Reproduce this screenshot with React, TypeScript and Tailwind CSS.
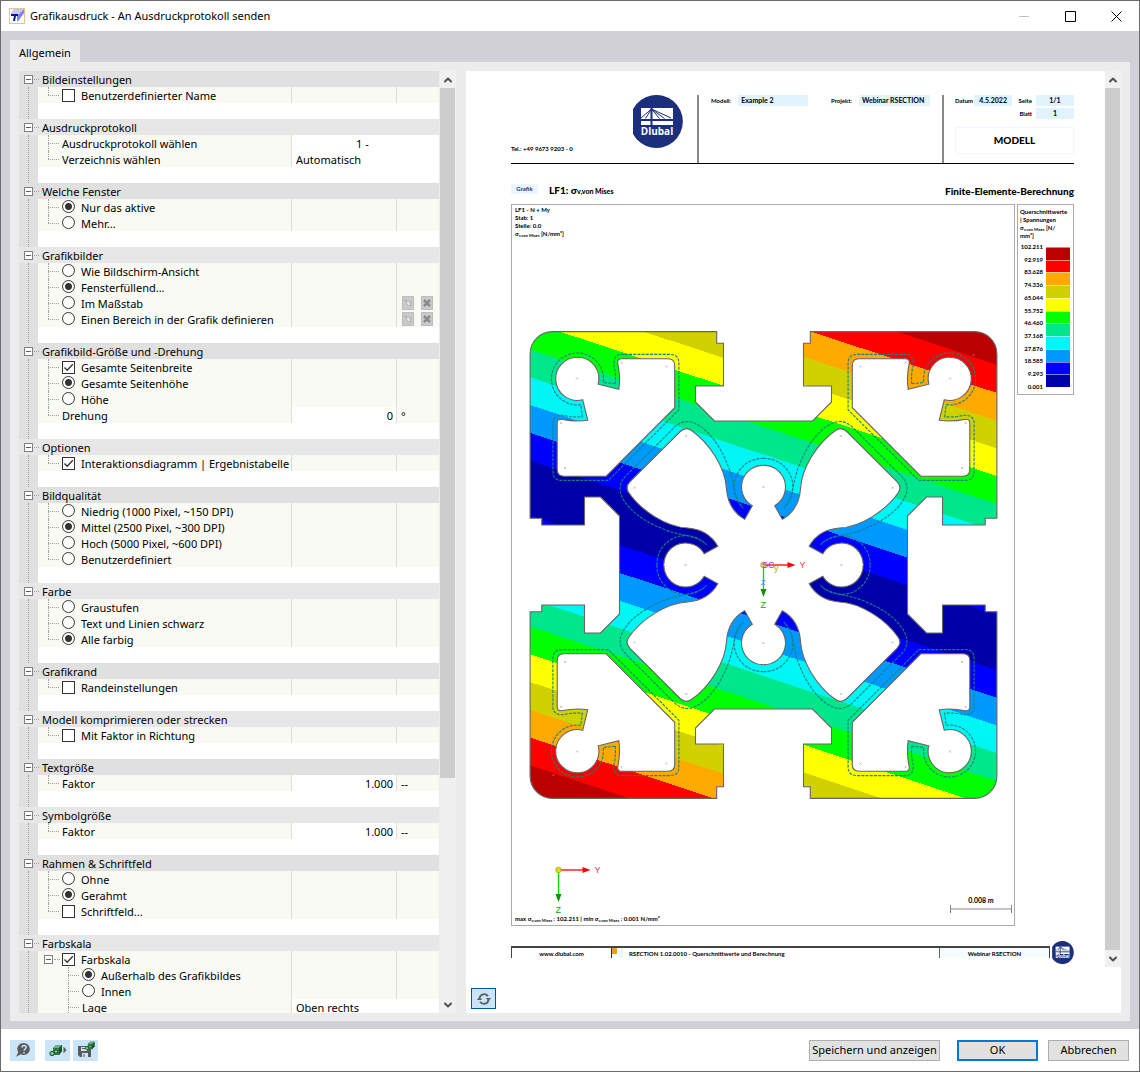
import { ReactNode } from "react";
import { clsx } from "clsx";
import { ChevronDown, ChevronUp } from "lucide-react";

type Row = {
  label: string;
  kind: "checkbox" | "radio" | "number" | "select";
  checked?: boolean;
  value?: string;
  unit?: string;
  tools?: boolean;
  centered?: boolean;
  nested?: boolean;
  expandable?: boolean;
  last?: boolean;
};

type Group = { title: string; rows: Row[] };

const groups: Group[] = [
  {
    title: "Bildeinstellungen",
    rows: [{ label: "Benutzerdefinierter Name", kind: "checkbox", last: true }],
  },
  {
    title: "Ausdruckprotokoll",
    rows: [
      {
        label: "Ausdruckprotokoll wählen",
        kind: "select",
        value: "1 -",
        centered: true,
      },
      {
        label: "Verzeichnis wählen",
        kind: "select",
        value: "Automatisch",
        last: true,
      },
    ],
  },
  {
    title: "Welche Fenster",
    rows: [
      { label: "Nur das aktive", kind: "radio", checked: true },
      { label: "Mehr...", kind: "radio", last: true },
    ],
  },
  {
    title: "Grafikbilder",
    rows: [
      { label: "Wie Bildschirm-Ansicht", kind: "radio" },
      { label: "Fensterfüllend...", kind: "radio", checked: true },
      { label: "Im Maßstab", kind: "radio", tools: true },
      {
        label: "Einen Bereich in der Grafik definieren",
        kind: "radio",
        tools: true,
        last: true,
      },
    ],
  },
  {
    title: "Grafikbild-Größe und -Drehung",
    rows: [
      { label: "Gesamte Seitenbreite", kind: "checkbox", checked: true },
      { label: "Gesamte Seitenhöhe", kind: "radio", checked: true },
      { label: "Höhe", kind: "radio" },
      { label: "Drehung", kind: "number", value: "0", unit: "°", last: true },
    ],
  },
  {
    title: "Optionen",
    rows: [
      {
        label: "Interaktionsdiagramm | Ergebnistabelle",
        kind: "checkbox",
        checked: true,
        last: true,
      },
    ],
  },
  {
    title: "Bildqualität",
    rows: [
      { label: "Niedrig (1000 Pixel, ~150 DPI)", kind: "radio" },
      { label: "Mittel (2500 Pixel, ~300 DPI)", kind: "radio", checked: true },
      { label: "Hoch (5000 Pixel, ~600 DPI)", kind: "radio" },
      { label: "Benutzerdefiniert", kind: "radio", last: true },
    ],
  },
  {
    title: "Farbe",
    rows: [
      { label: "Graustufen", kind: "radio" },
      { label: "Text und Linien schwarz", kind: "radio" },
      { label: "Alle farbig", kind: "radio", checked: true, last: true },
    ],
  },
  {
    title: "Grafikrand",
    rows: [{ label: "Randeinstellungen", kind: "checkbox", last: true }],
  },
  {
    title: "Modell komprimieren oder strecken",
    rows: [{ label: "Mit Faktor in Richtung", kind: "checkbox", last: true }],
  },
  {
    title: "Textgröße",
    rows: [
      { label: "Faktor", kind: "number", value: "1.000", unit: "--", last: true },
    ],
  },
  {
    title: "Symbolgröße",
    rows: [
      { label: "Faktor", kind: "number", value: "1.000", unit: "--", last: true },
    ],
  },
  {
    title: "Rahmen & Schriftfeld",
    rows: [
      { label: "Ohne", kind: "radio" },
      { label: "Gerahmt", kind: "radio", checked: true },
      { label: "Schriftfeld...", kind: "checkbox", last: true },
    ],
  },
  {
    title: "Farbskala",
    rows: [
      {
        label: "Farbskala",
        kind: "checkbox",
        checked: true,
        expandable: true,
        last: true,
      },
      {
        label: "Außerhalb des Grafikbildes",
        kind: "radio",
        checked: true,
        nested: true,
      },
      { label: "Innen", kind: "radio", nested: true },
      { label: "Lage", kind: "select", value: "Oben rechts", nested: true },
    ],
  },
];

const bands = [
  "#0000a8",
  "#0000ff",
  "#0099ff",
  "#00f5f5",
  "#00e68a",
  "#00ff00",
  "#ffff00",
  "#d1d100",
  "#ffaa00",
  "#ff0000",
  "#bb0000",
];

const levels = [
  "102.211",
  "92.919",
  "83.628",
  "74.336",
  "65.044",
  "55.752",
  "46.460",
  "37.168",
  "27.876",
  "18.585",
  "9.293",
  "0.001",
];

const BAND = 27.75;

const quadrants = ["scale(1 1)", "scale(-1 1)", "scale(1 -1)", "scale(-1 -1)"];

// One quarter of the profile, measured from the centroid.
const outerEdge =
  "M0 -144 H-49 L-68 -163 V-179 H-40 V-221.7 H-46.8 V-233.4 H-211 A22.4 22.4 0 0 0 -233.4 -211 V-46.8 H-221.7 V-40 H-179 V-68 H-163 L-144 -49 V0";
const innerEdge =
  "M0 -99.6 A21.6 21.6 0 0 0 -11.2 -59.3 L-18.8 -45.7 C-30 -52 -36 -63 -37 -76 C-38 -97 -54 -122 -72 -134.5 Q-77.7 -138.8 -83.3 -133.5 L-133.5 -83.3 Q-138.8 -77.7 -134.5 -72 C-122 -54 -97 -38 -76 -37 C-63 -36 -52 -30 -45.7 -18.8 L-59.3 -11.2 A21.6 21.6 0 0 0 -99.6 0";
const pocket =
  "M-145.8 -202.2 Q-146 -206.3 -141.8 -206.3 H-95.5 Q-88.8 -206.3 -88.8 -199.6 V-157.3 L-157.3 -88.8 H-199.6 Q-206.3 -88.8 -206.3 -95.5 V-141.8 Q-206.3 -146 -202.2 -145.8 Q-188 -142.8 -175.7 -144.7 L-180.8 -165.3 A21.6 21.6 0 1 1 -165.3 -180.8 L-144.7 -175.7 Q-142.8 -188 -145.8 -202.2 Z";
const dashed =
  "M-148.2 -181.2 L-160.3 -182.6 A26 26 0 1 0 -182.6 -160.3 L-181.2 -148.2 Q-193 -147.5 -200 -149.8 Q-210.6 -150 -210.6 -142 V-93.5 Q-210.6 -84.6 -201.8 -84.6 H-155.2 L-84.6 -155.2 V-201.8 Q-84.6 -210.6 -93.5 -210.6 H-142 Q-150 -210.6 -149.8 -200 Q-147.5 -193 -148.2 -181.2 M0 -106.6 A28.6 28.6 0 0 0 -20.2 -57 C-30 -66 -29 -83 -35 -98 C-43 -119 -54 -134 -67 -141 Q-79 -147 -88.5 -138.3 L-138.3 -88.5 Q-147 -79 -141 -67 C-134 -54 -119 -43 -98 -35 C-83 -29 -66 -30 -57 -20.2 A28.6 28.6 0 0 0 -106.6 0";

const crosses = [
  [-186.5, -186.5],
  [-142, -202.3],
  [-97, -198.5],
  [-202.3, -142],
  [-198.5, -97],
  [-77.3, -129],
  [-129, -77.3],
  [-210, -210],
  [0, -78],
  [-78, 0],
];

const AppIcon = () => (
  <svg className="size-4" viewBox="0 0 16 16" aria-hidden="true">
    <rect x="0.5" y="0.5" width="15" height="15" fill="#fff" stroke="#e9c08f" />
    <path d="M5 1h10L10 6H1z" fill="#c3c9fb" />
    <path d="M10 6 15 1v4l-5 7-2 2V7z" fill="#7b84ee" />
    <path d="M2 6h7v2H7l-1 5H4l1-5H2z" fill="#14147a" />
  </svg>
);

const Logo = ({ className }: { className: string }) => (
  <svg className={className} viewBox="0 0 50 53" role="img" aria-label="Dlubal">
    <path d="M0 14A26.5 26.5 0 1 1 0 39z" fill="#1b2f7c" />
    <rect x="8" y="13" width="32" height="17" fill="#fff" />
    <g stroke="#1b2f7c" fill="none">
      <path d="M8 25h32" strokeWidth="2" />
      <path d="M18.5 13v17" strokeWidth="2" />
      <path d="M8 23 18.5 14 38 23M18.5 14l8 9.500M18.500 14l-6 9.500M18.500 14l13 9.500" />
    </g>
    <text
      x="24"
      y="40"
      textAnchor="middle"
      fontSize="10"
      fontWeight="700"
      fill="#fff"
      className="font-['Open_Sans',sans-serif]"
    >
      Dlubal
    </text>
  </svg>
);

const Expander = ({ label }: { label: string }) => (
  <button
    aria-label={label}
    className="flex size-[9px] shrink-0 items-center justify-center border border-[#808080] bg-white"
  >
    <span className="h-px w-[5px] bg-[#606060]" />
  </button>
);

const Control = ({ row, name, id }: { row: Row; name: string; id: string }) => {
  if (row.kind === "checkbox") {
    return (
      <span className="relative mt-0.5 mr-1.5 size-[13px] shrink-0">
        <input
          id={id}
          type="checkbox"
          defaultChecked={row.checked}
          className="peer block size-full appearance-none border border-[#333] bg-white"
        />
        <svg
          viewBox="0 0 13 13"
          className="pointer-events-none absolute inset-0 hidden peer-checked:block"
        >
          <path d="M2.500 6.500 5.200 9.300 10.800 3.300" fill="none" stroke="#333" strokeWidth="1.300" />
        </svg>
      </span>
    );
  }
  if (row.kind === "radio") {
    return (
      <input
        id={id}
        type="radio"
        name={name}
        defaultChecked={row.checked}
        className="mt-px mr-1.5 block size-[13px] shrink-0 appearance-none rounded-full border border-[#333] bg-white checked:bg-[radial-gradient(circle,#333_3px,#fff_4px)]"
      />
    );
  }
  return null;
};

const ToolButtons = () => (
  <span className="flex gap-[7px] pl-[5px] pt-px">
    <button
      disabled
      aria-label="Auswählen"
      className="h-3.5 w-3 border border-[#bdbdbd] bg-[#cacaca]"
    >
      <svg viewBox="0 0 10 12" className="h-3 w-2.5">
        <path d="M1 3.500h2M3 4l5.500 1.500-2 1 1.500 2.500-3.500-1z" fill="#f4f4f4" stroke="#a0a0a0" strokeWidth="0.700" />
      </svg>
    </button>
    <button
      disabled
      aria-label="Löschen"
      className="h-3.5 w-3 border border-[#bdbdbd] bg-[#cacaca]"
    >
      <svg viewBox="0 0 10 12" className="h-3 w-2.5">
        <path d="m2 3 6 6M8 3 2 9" stroke="#8a8a8a" strokeWidth="2.500" />
      </svg>
    </button>
  </span>
);

const PropertyRow = ({ row, name, id }: { row: Row; name: string; id: string }) => (
  <div className="flex h-4 shrink-0 bg-[#f9faf4]">
    <div className={clsx("flex w-[253px] shrink-0", row.nested ? "pl-[30px]" : "pl-2.5")}>
      {row.expandable ? (
        <span className="-ml-1 flex w-[18px] shrink-0 items-center">
          <Expander label={row.label} />
          <span className="ml-px w-1.5 border-t border-dotted border-[#a0a0a0]" />
        </span>
      ) : (
        <span className="flex w-3.5 shrink-0 flex-col">
          <span className="h-2 border-l border-dotted border-[#a0a0a0]" />
          <span
            className={clsx(
              "h-2 w-[11px] border-t border-dotted border-[#a0a0a0]",
              !row.last && "border-l",
            )}
          />
        </span>
      )}
      <Control row={row} name={name} id={id} />
      <label htmlFor={id} className="leading-[18px] whitespace-nowrap">
        {row.label}
      </label>
    </div>
    {row.kind === "select" ? (
      <div className="flex min-w-0 flex-1 border-l border-[#dcdcdc] bg-white">
        <select
          id={id}
          className={clsx(
            "h-4 w-full appearance-none bg-transparent leading-[18px]",
            row.centered ? "pl-16" : "pl-1",
          )}
        >
          <option>{row.value}</option>
        </select>
      </div>
    ) : (
      <>
        <div className="flex min-w-0 flex-1 border-l border-[#dcdcdc]">
          {row.kind === "number" && (
            <input
              id={id}
              type="text"
              defaultValue={row.value}
              className="h-4 w-full bg-white pr-[3px] pt-0.5 text-right leading-4"
            />
          )}
        </div>
        <div className="w-[43px] shrink-0 border-l border-[#dcdcdc]">
          {row.unit && <span className="pl-1 leading-[18px]">{row.unit}</span>}
          {row.tools && <ToolButtons />}
        </div>
      </>
    )}
  </div>
);

const PropertyGroup = ({ group, index }: { group: Group; index: number }) => (
  <section className="shrink-0">
    <header
      className={clsx(
        "flex h-4 items-center",
        index % 2 ? "bg-[#e7e7e7]" : "bg-[#e0e0e0]",
      )}
    >
      <span className="w-[5px]" />
      <Expander label={group.title} />
      <span className="mx-px w-[5px] border-t border-dotted border-[#a0a0a0]" />
      <h2 className="ml-0.5 self-start leading-[18px]">{group.title}</h2>
    </header>
    <div className="flex bg-[#e0e0e0]">
      <div className="w-[19px] shrink-0 pl-[9px]">
        <div className="h-full border-l border-dotted border-[#a0a0a0]" />
      </div>
      <div className="flex min-w-0 flex-1 flex-col bg-white pb-4">
        {group.rows.map((row, i) => (
          <PropertyRow
            key={row.label}
            row={row}
            id={`row-${index}-${i}`}
            name={`group-${index}-${row.kind === "radio" && row.checked ? i : "r"}`}
          />
        ))}
      </div>
    </div>
  </section>
);

const ScrollBar = ({ children }: { children: ReactNode }) => (
  <div className="flex w-4 shrink-0 flex-col bg-[#f0f0f0]">
    <div className="flex h-[17px] w-[15px] shrink-0 items-center justify-center text-[#505050]">
      <ChevronUp className="size-3" strokeWidth={4} />
    </div>
    <div className="min-h-0 flex-1">{children}</div>
    <div className="flex h-[17px] w-[15px] shrink-0 items-center justify-center text-[#505050]">
      <ChevronDown className="size-3" strokeWidth={4} />
    </div>
  </div>
);

const Profile = () => (
  <g transform="translate(763.5 565)">
    <defs>
      <clipPath id="profile">
        {quadrants.map((q) => (
          <path key={q} d={`${outerEdge} L0.500 0.500 Z`} transform={q} />
        ))}
        <path d="M-1 -144H1V144H-1zM-144 -1V1H144V-1z" />
      </clipPath>
    </defs>
    <g clipPath="url(#profile)">
      <g transform="skewY(18.3)">
        {bands.map((color, i) => (
          <g key={color} fill={color} shapeRendering="crispEdges">
            <rect x="-240" y={i * BAND} width="480" height={BAND + (i === 10 ? 20 : 0.5)} />
            <rect
              x="-240"
              y={-(i + 1) * BAND - (i === 10 ? 20 : 0)}
              width="480"
              height={BAND + (i === 10 ? 20 : 0.5)}
            />
          </g>
        ))}
      </g>
    </g>
    {quadrants.map((q) => (
      <g key={q} transform={q} fill="none" stroke="#666" strokeWidth="1.100">
        <path d={`${innerEdge} V1 H1 V-99 Z`} fill="#fff" stroke="none" />
        <path d={pocket} fill="#fff" />
        <path d={innerEdge} />
        <path d={outerEdge} />
        <path d={dashed} stroke="#168080" strokeDasharray="3 1.200" />
        {crosses.map(([x, y]) => (
          <path
            key={`${x},${y}`}
            d={`M${x - 1} ${y - 1}l2 2m0 -2l-2 2`}
            stroke="#999"
            strokeWidth="0.500"
          />
        ))}
      </g>
    ))}
  </g>
);

const Axes = ({ x, y }: { x: number; y: number }) => (
  <g transform={`translate(${x} ${y})`} fontSize="9">
    <path d="M0 0H25" stroke="#ff0000" strokeWidth="1.300" />
    <path d="M24 -3 32 0 24 3z" fill="#ff0000" />
    <path d="M0 0V25" stroke="#00dd00" strokeWidth="1.300" />
    <path d="M-3 24 0 32 3 24z" fill="#009900" />
    <circle r="2.800" fill="#e8d800" stroke="#8a8000" strokeWidth="0.500" />
    <text x="36" y="3" fill="#ff3030">
      Y
    </text>
    <text x="-3" y="43" fill="#00b000">
      Z
    </text>
  </g>
);

const Drawing = () => (
  <svg
    viewBox="512 240 502 674"
    className="min-h-0 w-full flex-1 font-['Liberation_Sans',sans-serif] font-normal"
    role="img"
    aria-label="Finite-Elemente-Berechnung"
  >
    <Profile />
    <Axes x={763.5} y={565} />
    <g fontSize="9">
      <text x="762" y="568" fill="#9933ff">
        SC
      </text>
      <text x="774" y="571" fill="#a8b000">
        y
      </text>
      <text x="761" y="585" fill="#3399ff">
        z
      </text>
    </g>
    <Axes x={558.5} y={870} />
    <path d="M950.500 905v8M1011.500 905v8M950.500 909H1011.500" stroke="#888" fill="none" />
    <text
      x="981"
      y="903"
      textAnchor="middle"
      fontSize="7"
      fontWeight="700"
      className="font-[Lato,sans-serif]"
    >
      0.008 m
    </text>
  </svg>
);

const Sigma = () => (
  <span>
    σ<sub className="text-[4px]">v,von Mises</sub>
  </span>
);

const Legend = () => (
  <aside className="flex w-[57px] shrink-0 flex-col self-start border border-[#aaa] px-0.5 pt-[3px] pb-[3px]">
    <p className="h-[35px] leading-2 whitespace-nowrap">
      Querschnittwerte
      <br />| Spannungen
      <br />
      <Sigma /> [N/
      <br />
      mm²]
    </p>
    <div className="flex justify-end gap-[3px] pr-px">
      <ul className="flex h-37 flex-col justify-between text-right leading-2">
        {levels.map((level) => (
          <li key={level}>{level}</li>
        ))}
      </ul>
      <div className="my-1 flex w-6 flex-col-reverse">
        {bands.map((color) => (
          <span
            key={color}
            className="flex-1 border-t border-white/50"
            style={{ backgroundColor: color }}
          />
        ))}
      </div>
    </div>
  </aside>
);

const Field = ({
  label,
  value,
  className,
}: {
  label: string;
  value: string;
  className: string;
}) => (
  <div className="flex h-[11px] items-center">
    <dt>{label}</dt>
    <dd className={clsx("h-full bg-[#e1f3fd] text-[7px] whitespace-nowrap", className)}>
      {value}
    </dd>
  </div>
);

const Page = () => (
  <article className="flex min-w-0 flex-1 flex-col pt-6 pr-[31px] pb-[3px] pl-[45px] font-[Lato,sans-serif] text-[6px] leading-[11px] font-bold">
    <header className="flex h-[69px] shrink-0 border-b border-black">
      <div className="flex w-[188px] shrink-0 items-start border-r-2 border-[#888]">
        <p className="w-[122px] pt-12">Tel.: +49 9673 9203 - 0</p>
        <Logo className="h-[53px] w-[50px]" />
      </div>
      <dl className="flex min-w-0 flex-1 items-start justify-between pr-3 pl-3">
        <Field label="Modell:" value="Example 2" className="ml-[7px] w-[70px] pl-[3px]" />
        <Field label="Projekt:" value="Webinar RSECTION" className="ml-[7px] w-[71px] pl-[3px]" />
      </dl>
      <div className="flex w-[132px] shrink-0 flex-col border-l-2 border-[#888] pl-[11px]">
        <dl className="flex flex-col items-end gap-0.5">
          <div className="flex w-full justify-between">
            <Field label="Datum" value="4.5.2022" className="ml-px w-[38px] text-center" />
            <Field label="Seite" value="1/1" className="ml-1 w-[38px] text-center" />
          </div>
          <Field label="Blatt" value="1" className="ml-1 w-[38px] text-center" />
        </dl>
        <p className="mt-2 flex h-[27px] items-center justify-center border border-[#eef8fe] text-[10px] font-black">
          MODELL
        </p>
      </div>
    </header>
    <div className="flex h-10 shrink-0 items-center pt-3.5">
      <p className="mb-1 h-2.5 w-[27px] bg-[#ebf6fe] text-center leading-[10px] text-[#1b2f7c]">
        Grafik
      </p>
      <h1 className="ml-[11px] flex-1 text-[10px] font-black">
        LF1: <span>σ</span>
        <span className="text-[7px]">v,von Mises</span>
      </h1>
      <p className="text-[10px] font-black">Finite-Elemente-Berechnung</p>
    </div>
    <div className="flex min-h-0 flex-1 gap-0.5">
      <figure className="flex min-w-0 flex-1 flex-col border border-[#aaa]">
        <figcaption className="h-[35px] pl-[3px] pt-px leading-[8px]">
          LF1 - N + My
          <br />
          Stab: 1
          <br />
          Stelle: 0.0
          <br />
          <Sigma /> [N/mm²]
        </figcaption>
        <Drawing />
        <p className="h-[11px] shrink-0 pl-[3px] leading-[10px]">
          max <Sigma /> : 102.211 | min <Sigma /> : 0.001 N/mm²
        </p>
      </figure>
      <Legend />
    </div>
    <footer className="flex h-[38px] shrink-0 items-end justify-between">
      <div className="mb-1.5 flex h-3 w-[539px] border-x border-t-2 border-[#444]">
        <p className="w-[99px] text-center">www.dlubal.com</p>
        <p className="flex flex-1 border-l border-[#333]">
          <span className="h-1.5 w-[5px] bg-[#e8a020]" />
          <span className="ml-px h-2.5 w-[5px] bg-[#eef8fe]" />
          <span className="pl-1.5">RSECTION 1.02.0010 - Querschnittwerte und Berechnung</span>
        </p>
        <p className="w-[110px] border-l border-[#666] bg-[#f4fcff] text-center">
          Webinar RSECTION
        </p>
      </div>
      <Logo className="h-[23px] w-[22px]" />
    </footer>
  </article>
);

const IconButton = ({ label, children }: { label: string; children: ReactNode }) => (
  <button
    aria-label={label}
    className="flex h-[21px] w-[25px] items-center justify-center bg-[#cce4f7]"
  >
    {children}
  </button>
);

const cube = (
  <g>
    <path d="m5 4 3-3h6v6l-3 4H5z" fill="#2d7a45" />
    <path d="m5 4 3-3h6l-3 3z" fill="#66b47c" />
    <path d="m11 4 3-3v6l-3 4z" fill="#155228" />
    <circle cx="4" cy="9.500" r="2.200" fill="#7cc492" stroke="#155228" />
    <circle cx="8" cy="7.500" r="1.500" fill="#b5dfc1" stroke="#155228" />
  </g>
);

const App = () => (
  <div className="flex h-screen flex-col border border-[#6b6b6b] bg-white font-['Noto_Sans',sans-serif] text-[11px] text-black">
    <header className="flex h-[30px] shrink-0 items-center pl-2">
      <AppIcon />
      <h1 className="flex-1 pl-[5px]">Grafikausdruck - An Ausdruckprotokoll senden</h1>
      <div className="flex">
        <button disabled aria-label="Minimieren" className="flex w-[46px] justify-center">
          <svg viewBox="0 0 11 11" className="size-[11px]">
            <path d="M0 5.500h10" stroke="#c0c0c0" />
          </svg>
        </button>
        <button aria-label="Maximieren" className="flex w-[46px] justify-center">
          <svg viewBox="0 0 11 11" className="size-[11px]">
            <path d="M.5.5h10v10H.5z" fill="none" stroke="#000" />
          </svg>
        </button>
        <button aria-label="Schließen" className="flex w-[46px] justify-center">
          <svg viewBox="0 0 11 11" className="size-[11px]">
            <path d="m.5.5 10 10M10.500.5l-10 10" stroke="#000" />
          </svg>
        </button>
      </div>
    </header>

    <main className="flex min-h-0 flex-1 flex-col bg-[#d1d0d6] px-[9px] pt-[9px] pb-2">
      <div role="tablist" className="flex">
        <button role="tab" aria-selected="true" className="h-[22px] bg-[#ececec] px-[9px] pt-1">
          Allgemein
        </button>
      </div>
      <div className="flex min-h-0 flex-1 bg-[#ececec] p-[9px] pb-2">
        <div className="flex w-[437px] shrink-0 gap-px">
          <div className="flex min-w-0 flex-1 flex-col overflow-hidden">
            {groups.map((group, i) => (
              <PropertyGroup key={group.title} group={group} index={i} />
            ))}
          </div>
          <ScrollBar>
            <div className="h-[76%] w-[15px] bg-[#cdcdcd]" />
          </ScrollBar>
        </div>
        <section className="ml-2.5 flex min-w-0 flex-1 flex-col bg-white">
          <div className="flex min-h-0 flex-1">
            <Page />
            <ScrollBar>
              <div className="h-full w-[15px] bg-[#cdcdcd]" />
            </ScrollBar>
          </div>
          <div className="flex h-[46px] shrink-0 items-end pb-1 pl-[5px]">
            <button
              aria-label="Aktualisieren"
              className="flex h-[21px] w-[25px] items-center justify-center border border-[#00549e] bg-[#cce4f7]"
            >
              <svg viewBox="0 0 16 16" className="size-4" fill="none" stroke="#606060" strokeWidth="1.800">
                <path d="M3.500 7A4.700 4.700 0 0 1 12 5.200M12.500 9A4.700 4.700 0 0 1 4 10.800" />
                <path d="M.8 9h5.400L3.500 6zM9.800 7h5.400L12.500 10z" fill="#606060" stroke="none" />
              </svg>
            </button>
          </div>
        </section>
      </div>
    </main>

    <footer className="flex h-[42px] shrink-0 items-center pr-2.5 pl-[9px]">
      <IconButton label="Hilfe">
        <svg viewBox="0 0 16 16" className="size-4">
          <path d="M9 1a6 6 0 1 1-3.200 11.200L1 14.800l2.300-4.600A6 6 0 0 1 9 1z" fill="#5a5a5a" />
          <path d="M7 5.500C7 3 11.200 3 11.200 5.400 11.200 7 9 7 9 8.800M9 10v1.500" fill="none" stroke="#cce4f7" strokeWidth="1.500" />
        </svg>
      </IconButton>
      <span className="w-2.5" />
      <IconButton label="Einstellungen laden">
        <svg viewBox="0 0 18 16" className="h-4 w-[18px]">
          <g transform="translate(-1 2)">{cube}</g>
          <path d="M14.500 4.500 17.500 8l-3 3.500z" fill="#5a5a5a" />
        </svg>
      </IconButton>
      <span className="w-[3px]" />
      <IconButton label="Einstellungen speichern">
        <svg viewBox="0 0 18 18" className="size-[18px]">
          <path d="M1 5h11v3h2v8H3l-2-2z" fill="#5a5a5a" />
          <path d="M4 6h6v4H4zM5 12h6v4H5z" fill="#cce4f7" />
          <path d="M5 7.500h4M7 13v3" stroke="#5a5a5a" />
          <g transform="translate(7 0) scale(.75)">{cube}</g>
        </svg>
      </IconButton>
      <span className="flex-1" />
      <button className="h-[21px] w-[131px] border border-[#adadad] bg-[#e1e1e1] whitespace-nowrap">
        Speichern und anzeigen
      </button>
      <button className="ml-[17px] h-[21px] w-[81px] border-2 border-[#0078d7] bg-[#e1e1e1]">
        OK
      </button>
      <button className="ml-2.5 h-[21px] w-[81px] border border-[#adadad] bg-[#e1e1e1]">
        Abbrechen
      </button>
    </footer>
  </div>
);

export default App;
